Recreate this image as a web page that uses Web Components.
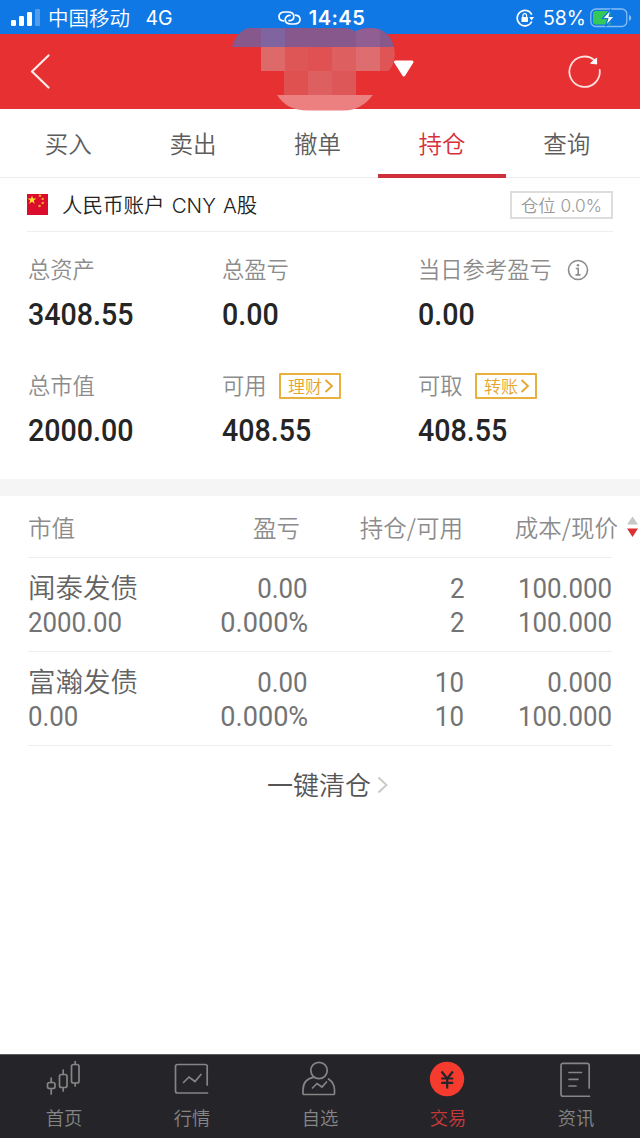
<!DOCTYPE html>
<html lang="zh-CN">
<head>
<meta charset="utf-8">
<meta name="viewport" content="width=device-width, initial-scale=1">
<title>持仓</title>
<style>
  html, body { margin: 0; padding: 0; height: 100%; }
  body {
    background: #fff;
    color: #666;
    font-family: "Noto Sans CJK SC", sans-serif;
    font-weight: 350;
    overflow: hidden;
  }
</style>
</head>
<body>
<trade-app></trade-app>

<script>
const define = (name, html) => {
  customElements.define(name, class extends HTMLElement {
    connectedCallback() {
      if (this.shadowRoot) return;
      this.attachShadow({ mode: 'open' });
      const markup = typeof html === 'function' ? html(this) : html;
      this.shadowRoot.innerHTML = `<style>* { box-sizing: border-box; } svg { display: block; flex: none; }</style>${markup}`;
    }
  });
};

// Number in the condensed figure face
define('num-text', `
  <style>
    :host { display: inline-block; font-family: Roboto, sans-serif; font-weight: 400; transform: scaleX(var(--squeeze, .94)); transform-origin: var(--origin, left); white-space: nowrap; }
  </style>
  <slot></slot>
`);

define('status-bar', `
  <style>
    :host { display: flex; align-items: center; height: 34px; padding: 2px 8px 0 11px; background: #0f78e5; color: #fff; font-size: 20px; line-height: 32px; }
    .side { flex: 1; display: flex; align-items: center; }
    .right { justify-content: flex-end; }
    .carrier { margin: -2px 0 0 8px; font-size: 20.5px; }
    .net { margin-left: 15.5px; font: 400 19.5px/32px Inter, sans-serif; }
    .mid { display: flex; align-items: center; }
    .time { margin-left: 8px; font: 600 20px/32px Inter, sans-serif; letter-spacing: .5px; }
    .pct { margin: 0 4px 0 9px; font: 400 19.5px/32px Inter, sans-serif; }
  </style>
  <div class="side">
    <svg width="29" height="18" viewBox="0 0 29 18" fill="#fff">
      <rect x="0" y="11" width="5" height="6" rx="1.2"/>
      <rect x="8" y="7" width="5" height="10" rx="1.2"/>
      <rect x="16" y="3" width="5" height="14" rx="1.2"/>
      <rect x="24" y="0" width="5" height="17" rx="1.2" opacity=".28"/>
    </svg>
    <span class="carrier">中国移动</span><span class="net">4G</span>
  </div>
  <div class="mid">
    <svg width="23" height="14" viewBox="0 0 23 14" fill="none" stroke="#fff" stroke-width="1.7" stroke-linecap="round">
      <path d="M5.500 9.800C2.800 9.500 1 8 1 5.400S3.300 1 6.500 1H10c3.500 0 5.800 1.800 5.800 4.400 0 2.500-2 4.200-4.800 4.200"/>
      <path d="M17.500 4.200c2.700.3 4.500 1.800 4.500 4.400S19.700 13 16.500 13H13c-3.500 0-5.800-1.800-5.800-4.400 0-2.500 2-4.200 4.800-4.200"/>
    </svg>
    <span class="time">14:45</span>
  </div>
  <div class="side right">
    <svg width="18" height="18" viewBox="0 0 18 18" fill="none" stroke="#fff" stroke-width="1.6">
      <path d="M15.800 5.700A7.700 7.700 0 1 0 15.800 12.500"/>
      <path d="M13.200 8h4.800l-2.400 3.600z" fill="#fff" stroke="none"/>
      <rect x="5.500" y="8" width="6.500" height="5" rx=".7" fill="#fff" stroke="none"/>
      <path d="M6.900 8V6.500a1.850 1.850 0 0 1 3.700 0V8" stroke-width="1.200"/>
    </svg>
    <span class="pct">58%</span>
    <svg width="42" height="20" viewBox="0 0 42 20">
      <rect x=".8" y="1" width="36" height="17.500" rx="5" fill="none" stroke="#fff" stroke-opacity=".5" stroke-width="1.300"/>
      <path d="M39 7c3 .8 3 5 0 5.800z" fill="#fff" opacity=".5"/>
      <path d="M6 3h14.500v13.500H6a3 3 0 0 1-3-3V6a3 3 0 0 1 3-3z" fill="#34c759"/>
      <path d="M21 1L12.500 10.500h5.300L15.500 18.500l9-10h-5.300z" fill="#fff" stroke="#0f78e5" stroke-width="1.200"/>
    </svg>
  </div>
`);

define('title-bar', `
  <style>
    :host { position: relative; display: flex; align-items: center; justify-content: space-between; height: 75px; padding: 0 38px 0 30px; background: #e73031; }
    .account { position: absolute; left: 230px; top: -8px; }
  </style>
  <svg width="20" height="36" viewBox="0 0 20 36" fill="none" stroke="#ffeceb" stroke-width="2.200" stroke-linecap="round" stroke-linejoin="round">
    <path d="M18.500 1.500L2 17.500l16.500 16"/>
  </svg>
  <svg class="account" width="186" height="88" viewBox="230 26 186 88">
    <path d="M232 47c3-11 10-19 19-19h93q7 0 11 3.500 6-3.500 17-3.500c12 0 20 9 22 19z" fill="#87588c"/>
    <path d="M261 28h24v19h-24z" fill="#8064a0"/>
    <path d="M356 31q5-3 14-3 6 0 10 2v17h-24z" fill="#905e92"/>
    <path d="M261 47h24v24h-24z" fill="#dd6969"/>
    <path d="M285 47h23v24h-23z" fill="#df5657"/>
    <path d="M308 47h24v24h-24z" fill="#df5152"/>
    <path d="M332 47h24v24h-24z" fill="#dd5f60"/>
    <path d="M356 47h24v24h-24z" fill="#dd6d6e"/>
    <path d="M380 47h14c2 10 0 19-6 24h-8z" fill="#df5556"/>
    <path d="M284 71h24v24h-24z" fill="#df5051"/>
    <path d="M308 71h24v24h-24z" fill="#dd5f60"/>
    <path d="M332 71h24v24h-24z" fill="#dd5758"/>
    <path d="M277 95h96c-8 10-17 15.500-29 15.500h-36c-15 0-24-5-31-15.500z" fill="#ec8081"/>
    <path d="M395.500 62h16.500l-8.200 13z" fill="#fff" stroke="#fff" stroke-width="3" stroke-linejoin="round"/>
  </svg>
  <svg width="34" height="34" viewBox="0 0 34 34" fill="none" stroke="#ffdedd" stroke-width="1.800" stroke-linecap="round">
    <path d="M26.500 5.200A15.200 15.200 0 1 0 31.700 15"/>
    <path d="M28.600 3.500v5.500l-5.600-.8z" fill="#fff" stroke="#fff" stroke-width="1"/>
  </svg>
`);

define('trade-tab', `
  <style>
    :host { position: relative; flex: 1; text-align: center; font-size: 23.5px; line-height: 68px; color: #5d5d5d; }
    :host([active]) { color: #d6303a; }
    :host([active])::after { content: ''; position: absolute; left: 50%; bottom: -1px; width: 128px; height: 4px; margin-left: -64px; background: #d0303c; }
  </style>
  <slot></slot>
`);

define('trade-tabs', `
  <style>
    :host { display: flex; height: 69px; padding: 0 11px 0 6px; border-bottom: 1.5px solid #ececec; }
  </style>
  <slot></slot>
`);

define('account-row', `
  <style>
    :host { display: flex; align-items: center; height: 54px; margin: 0 27px; border-bottom: 1px solid #eee; }
    .name { margin: 2px 0 0 14px; font-family: Inter, "Noto Sans CJK SC", sans-serif; font-size: 20.5px; line-height: 30px; word-spacing: 1.4px; color: #222; white-space: nowrap; }
    .ratio { margin-left: auto; width: 103px; height: 28px; border: 2px solid #ddd; color: #999; font-family: Inter, "Noto Sans CJK SC", sans-serif; font-size: 17.3px; line-height: 26px; text-align: center; white-space: nowrap; }
  </style>
  <svg width="21" height="21" viewBox="0 0 21 21">
    <rect width="21" height="21" fill="#dc0d2c"/>
    <path d="M5 1.500l1.100 3.100h3.200L6.800 6.500l.9 3.200L5 7.800 2.300 9.700l.9-3.200L.7 4.600h3.200z" fill="#ffde2e"/>
    <g fill="#f6a52b"><circle cx="13" cy="1.800" r="1.300"/><circle cx="15.700" cy="4.900" r="1.200"/><circle cx="15.700" cy="9" r="1.200"/><circle cx="12.500" cy="12" r="1.300"/></g>
  </svg>
  <span class="name"><slot></slot></span>
  <span class="ratio"><slot name="ratio"></slot></span>
`);

define('metric-item', el => `
  <style>
    :host { display: block; }
    .label { display: flex; align-items: center; height: 30px; font-size: 22.3px; line-height: 28px; color: #8c8c8c; white-space: nowrap; }
    .text { margin-top: -4px; }
    num-text { display: block; height: 40px; margin-top: 10px; font-size: 31px; line-height: 40px; font-weight: 500; color: #252525; --squeeze: .923; }
  </style>
  <div class="label"><span class="text">${el.getAttribute('label')}</span><slot></slot></div>
  <num-text>${el.getAttribute('value')}</num-text>
`);

define('metric-grid', `
  <style>
    :host { display: grid; grid-template-columns: 194px 196px 1fr; grid-auto-rows: 116px; height: 247px; padding: 23px 0 0 28px; }
  </style>
  <slot></slot>
`);

define('link-tag', `
  <style>
    :host { display: flex; align-items: center; width: 62px; height: 26px; margin-left: 12.5px; padding-left: 7px; border: 2px solid #e8b13f; border-radius: 1px; color: #e5a52c; font-size: 17px; line-height: 22px; }
    svg { margin-left: 2px; }
  </style>
  <slot></slot>
  <svg width="10" height="14" viewBox="0 0 10 14" fill="none" stroke="#e5a52c" stroke-width="1.800"><path d="M1.500 1l6.500 6-6.500 6"/></svg>
`);

define('info-icon', `
  <style>:host { display: block; margin-left: 15px; }</style>
  <svg width="22" height="22" viewBox="0 0 22 22" fill="none" stroke="#8c8c8c" stroke-width="1.600">
    <circle cx="11" cy="11" r="9.500"/>
    <path d="M8.800 9.500h2.400v6.200M8.500 15.900h5" />
    <circle cx="11" cy="6.200" r="1.300" fill="#8c8c8c" stroke="none"/>
  </svg>
`);

define('holding-head', `
  <style>
    :host { display: grid; grid-template-columns: 180px 92px 163px 155px 1fr; align-items: center; height: 62px; padding-left: 28px; font-size: 23.5px; line-height: 60px; color: #8c8c8c; text-align: right; white-space: nowrap; background: linear-gradient(#eee, #eee) 28px 100% / 584px 1px no-repeat; }
    .first { text-align: left; }
    svg { margin-left: 8px; }
  </style>
  <span class="first">市值</span>
  <span>盈亏</span>
  <span>持仓/可用</span>
  <span>成本/现价</span>
  <svg width="13" height="24" viewBox="0 0 13 24"><path d="M6.500 1.500l5.500 8H1z" fill="#c4c8c8"/><path d="M6.500 22l5.500-8.500H1z" fill="#dc3033"/></svg>
`);

define('holding-row', el => {
  const [name, value, profit, rate, held, usable, cost, price] = el.getAttribute('data').split(',');
  return `
  <style>
    :host { display: grid; grid-template-columns: 160px 120px 156px 148px; grid-auto-rows: 34px; height: 94px; margin: 0 28px; padding-top: 11px; border-bottom: 1px solid #eee; font-size: 27.5px; line-height: 35px; color: #737373; text-align: right; white-space: nowrap; --origin: right; }
    .left { text-align: left; --origin: left; }
    .name { color: #636363; }
    .rate { --squeeze: .985; }
  </style>
  <span class="left name">${name}</span>
  <span><num-text>${profit}</num-text></span>
  <span><num-text>${held}</num-text></span>
  <span><num-text>${cost}</num-text></span>
  <span class="left"><num-text>${value}</num-text></span>
  <span class="rate"><num-text>${rate}</num-text></span>
  <span><num-text>${usable}</num-text></span>
  <span><num-text>${price}</num-text></span>`;
});

define('clear-link', `
  <style>
    :host { display: flex; align-items: center; justify-content: center; height: 80px; padding-left: 16px; font-size: 26px; line-height: 76px; color: #555; }
    span { margin-top: -4px; }
    svg { margin: -2px 0 0 6px; }
  </style>
  <span><slot></slot></span>
  <svg width="12" height="18" viewBox="0 0 12 18" fill="none" stroke="#c8c8c8" stroke-width="1.800"><path d="M1.500 1.500l8 7.500-8 7.500"/></svg>
`);

const icons = {
  home: '<rect x="2.500" y="21.500" width="7.500" height="6" rx="2"/><path d="M6.200 17v4.500M6.200 27.500V33"/><rect x="14.500" y="13.500" width="7.500" height="13" rx="2"/><path d="M18.200 9v4.500M18.200 26.500V30"/><rect x="26.500" y="3.500" width="7.500" height="18.500" rx="2"/><path d="M30.200 0v3.500M30.200 22v3"/>',
  market: '<path d="M34.200 24V5.500a2 2 0 0 0-2-2H4.500a2 2 0 0 0-2 2V30a2 2 0 0 0 2 2h30"/><path d="M10.500 21.500l5.500-5.500 6 4.500 6-7"/>',
  self: '<circle cx="18" cy="9.500" r="8.200"/><path d="M13 16.200C6 17.500 2 22 2 29v3.500a1 1 0 0 0 1 1h29.500a1 1 0 0 0 1-1V29c0-5-1.500-8-6-11"/><path d="M11.500 27l4.500-4.500 5 3.500 4.500-5"/>',
  trade: '<circle cx="18" cy="18" r="17.200" fill="#f53a2e" stroke="none"/><path d="M12.500 10.500l5.700 7 5.700-7M18.200 17v10.500M12.200 17.500h12M12.200 21.800h12" stroke="#252529" stroke-width="2.200" stroke-linecap="butt"/>',
  news: '<path d="M32.200 27V4.300a2 2 0 0 0-2-2H6a2 2 0 0 0-2 2v29a2 2 0 0 0 2 2h26.500"/><path d="M12 11.500h12.500M12 18.300h9M12 25h7"/>'
};

define('nav-item', el => `
  <style>
    :host { flex: 1; display: flex; flex-direction: column; align-items: center; padding-top: 6px; font-size: 18.300px; line-height: 26px; color: #858585; }
    :host([active]) { color: #c8393c; }
    svg { margin: 0 2px 7px 0; }
  </style>
  <svg width="36" height="36" viewBox="0 0 36 36" fill="none" stroke="#858585" stroke-width="1.700" stroke-linecap="round">${icons[el.getAttribute('icon')]}</svg>
  <slot></slot>
`);

define('bottom-nav', `
  <style>
    :host { display: flex; height: 84px; margin-top: auto; background: #252529; border-top: 1px solid #5c5c5e; }
  </style>
  <slot></slot>
`);

define('trade-app', `
  <style>
    :host { display: flex; flex-direction: column; width: 640px; height: 1138px; background: #fff; }
    .gap { height: 17px; background: #f5f5f5; }
  </style>
  <status-bar></status-bar>
  <title-bar></title-bar>
  <trade-tabs>
    <trade-tab>买入</trade-tab>
    <trade-tab>卖出</trade-tab>
    <trade-tab>撤单</trade-tab>
    <trade-tab active>持仓</trade-tab>
    <trade-tab>查询</trade-tab>
  </trade-tabs>
  <account-row>人民币账户 CNY A股<span slot="ratio">仓位 0.0%</span></account-row>
  <metric-grid>
    <metric-item label="总资产" value="3408.55"></metric-item>
    <metric-item label="总盈亏" value="0.00"></metric-item>
    <metric-item label="当日参考盈亏" value="0.00"><info-icon></info-icon></metric-item>
    <metric-item label="总市值" value="2000.00"></metric-item>
    <metric-item label="可用" value="408.55"><link-tag>理财</link-tag></metric-item>
    <metric-item label="可取" value="408.55"><link-tag>转账</link-tag></metric-item>
  </metric-grid>
  <div class="gap"></div>
  <holding-head></holding-head>
  <holding-row data="闻泰发债,2000.00,0.00,0.000%,2,2,100.000,100.000"></holding-row>
  <holding-row data="富瀚发债,0.00,0.00,0.000%,10,10,0.000,100.000"></holding-row>
  <clear-link>一键清仓</clear-link>
  <bottom-nav>
    <nav-item icon="home">首页</nav-item>
    <nav-item icon="market">行情</nav-item>
    <nav-item icon="self">自选</nav-item>
    <nav-item icon="trade" active>交易</nav-item>
    <nav-item icon="news">资讯</nav-item>
  </bottom-nav>
`);
</script>
</body>
</html>
